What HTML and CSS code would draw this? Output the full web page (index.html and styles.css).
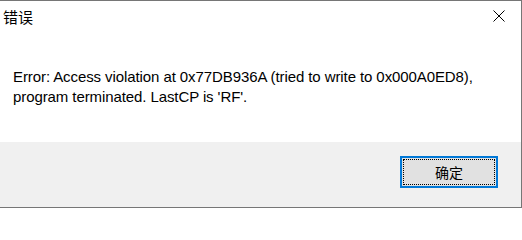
FILE: index.html
```html
<!DOCTYPE html>
<html lang="zh-CN">
<head>
<meta charset="utf-8">
<title>错误</title>
<link rel="stylesheet" href="styles.css">
</head>
<body>
<div class="dialog">
  <div class="main">
    <div class="titlebar">
      <span class="title">错误</span>
      <span class="close" aria-label="关闭">
        <svg width="12" height="12" viewBox="0 0 12 12"><path d="M0.5 0.5 L11.5 11.5 M11.5 0.5 L0.5 11.5" stroke="#000" stroke-width="1" fill="none"/></svg>
      </span>
    </div>
    <div class="message">
      <p>Error: Access violation at 0x77DB936A (tried to write to 0x000A0ED8), program terminated. LastCP is 'RF'.</p>
    </div>
  </div>
  <div class="footer">
    <button class="ok"><span class="focus">确定</span></button>
  </div>
</div>
</body>
</html>
```

FILE: styles.css
```css
html, body {
  margin: 0;
  padding: 0;
  background: #ffffff;
}
.dialog {
  width: 521px;
  height: 206px;
  border-top: 1px solid #767676;
  border-right: 1px solid #767676;
  border-bottom: 1px solid #767676;
  display: flex;
  flex-direction: column;
}
.main {
  height: 141px;
  background: #ffffff;
}
.titlebar {
  height: 30px;
  display: flex;
  justify-content: space-between;
  align-items: flex-start;
}
.title {
  font-family: "Noto Sans CJK SC", sans-serif;
  font-size: 15px;
  line-height: 20px;
  margin: 6px 0 0 3px;
  color: #000;
}
.close {
  display: block;
  width: 12px;
  height: 12px;
  margin: 9px 16px 0 0;
}
.close svg { display: block; }
.message {
  padding: 36px 0 0 13px;
}
.message p {
  margin: 0;
  width: 480px;
  font-family: "Liberation Sans", Arial, sans-serif;
  font-size: 15px;
  letter-spacing: -0.09px;
  line-height: 20px;
  color: #000;
}
.footer {
  flex: 1;
  background: #f0f0f0;
  display: flex;
  justify-content: flex-end;
  align-items: flex-start;
  padding: 14px 23px 0 0;
}
.ok {
  width: 98px;
  height: 32px;
  margin: 0;
  padding: 1px;
  border: 2px solid #0078d7;
  background: #e1e1e1;
  display: flex;
}
.focus {
  flex: 1;
  border: 1px dotted #000;
  display: flex;
  align-items: center;
  justify-content: center;
  font-family: "Noto Sans CJK SC", sans-serif;
  font-size: 14px;
  color: #000;
}
```
